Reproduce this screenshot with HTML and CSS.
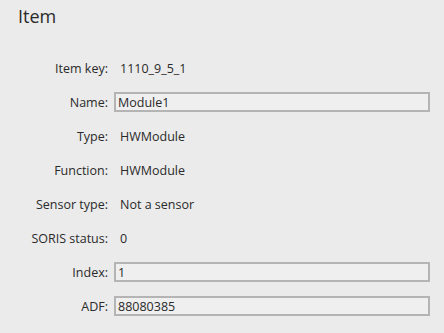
FILE: index.html
```html
<!DOCTYPE html>
<html>
<head>
<meta charset="utf-8">
<link rel="stylesheet" href="styles.css">
</head>
<body>
<div class="panel">
  <h1 class="title">Item</h1>
  <div class="form">
    <div class="label">Item key:</div><div class="value">1110_9_5_1</div>
    <div class="label">Name:</div><div class="value"><div class="box">Module1</div></div>
    <div class="label">Type:</div><div class="value">HWModule</div>
    <div class="label">Function:</div><div class="value">HWModule</div>
    <div class="label">Sensor type:</div><div class="value">Not a sensor</div>
    <div class="label">SORIS status:</div><div class="value">0</div>
    <div class="label">Index:</div><div class="value"><div class="box">1</div></div>
    <div class="label">ADF:</div><div class="value"><div class="box">88080385</div></div>
  </div>
</div>
</body>
</html>
```
FILE: styles.css
```css
html, body {
  margin: 0;
  padding: 0;
  background: #ebebeb;
  width: 444px;
  height: 333px;
  overflow: hidden;
}
.panel {
  font-family: "Open Sans", "Noto Sans", sans-serif;
  color: #2a2a2a;
  padding: 2px 14px 0 18px;
}
.title {
  margin: 0;
  font-weight: 400;
  font-size: 18px;
  line-height: 28px;
  height: 49px;
}
.form {
  display: grid;
  grid-template-columns: 90px 316px;
  grid-auto-rows: 34px;
  column-gap: 6px;
  font-size: 12.5px;
}
.label {
  display: flex;
  align-items: center;
  justify-content: flex-end;
}
.value {
  display: flex;
  align-items: center;
  padding-left: 6px;
}
.value:has(.box) {
  padding-left: 0;
}
.box {
  box-sizing: border-box;
  width: 316px;
  height: 20px;
  border: 2px solid #b4b4b4;
  background: #efefef;
  padding: 0 2px;
  display: flex;
  align-items: center;
}
```
